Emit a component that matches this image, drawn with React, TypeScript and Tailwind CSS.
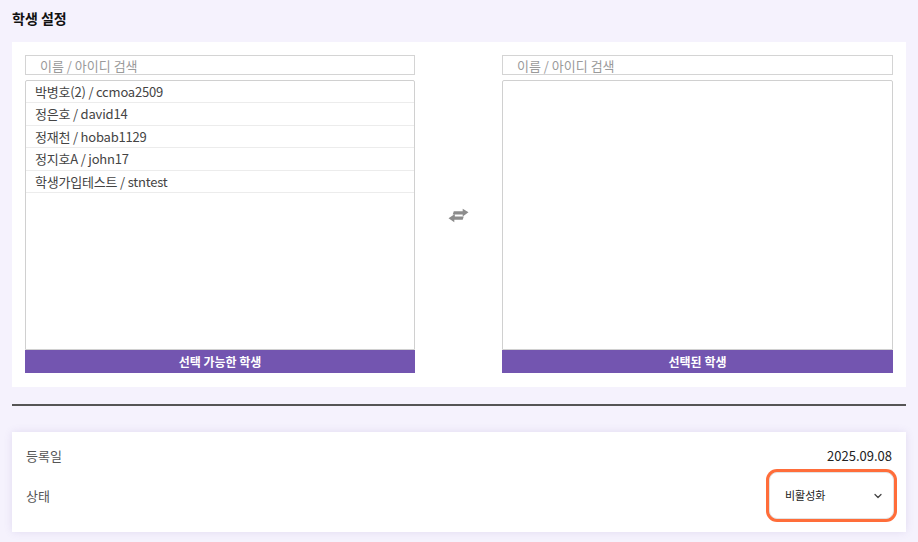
import React, { useState } from 'react';

const students = [
  '박병호(2) / ccmoa2509',
  '정은호 / david14',
  '정재천 / hobab1129',
  '정지호A / john17',
  '학생가입테스트 / stntest',
];

const FONT = { fontFamily: '"Noto Sans CJK KR", "Noto Sans", sans-serif' };

const StudentBox: React.FC<{ label: string; items: string[] }> = ({ label, items }) => {
  const [query, setQuery] = useState('');
  const shown = items.filter((s) => s.includes(query));

  return (
    <div className="flex flex-col">
      <input
        value={query}
        onChange={(e) => setQuery(e.target.value)}
        placeholder="이름 / 아이디 검색"
        className="h-[20px] border border-[#d4d4d4] bg-white px-[14px] text-[13px] text-[#444] outline-none placeholder:text-[#9a9a9a]"
      />
      <div className="mt-[5px] h-[270px] overflow-y-auto rounded-t-[2px] border border-[#d0d0d0] bg-white">
        {shown.map((s) => (
          <div
            key={s}
            className="flex h-[22.4px] items-center border-b border-[#ececec] px-[9px] text-[13px] tracking-[-0.2px] text-[#444]"
          >
            {s}
          </div>
        ))}
      </div>
      <div className="flex h-[23px] items-center justify-center bg-[#7355b0] text-[12px] font-bold text-white">
        {label}
      </div>
    </div>
  );
};

// two offset arrows, slightly slanted
const SwapIcon = () => (
  <svg width="21" height="15" viewBox="0 0 20 14" fill="#8c8c8c">
    <path d="M5.5 3h8.5V0.5L19.5 4 14 8V6H4.5z" />
    <path d="M15 8H6.5V5.5L0.5 9.5 6 13.5V11h8z" />
  </svg>
);

export default function App() {
  return (
    <div className="min-h-[542px] bg-[#f5f2fd] px-3" style={FONT}>
      <div className="flex h-[42px] items-start pt-[8px]">
        <h1 className="text-[14px] leading-[20px] font-bold text-[#111]">학생 설정</h1>
      </div>

      <div className="grid grid-cols-[390px_87px_1fr] bg-white px-[13px] pt-[13px] pb-[14px]">
        <StudentBox label="선택 가능한 학생" items={students} />
        <div className="flex items-center justify-center pt-[2px]">
          <SwapIcon />
        </div>
        <StudentBox label="선택된 학생" items={[]} />
      </div>

      <div className="mt-[17px] h-[2px] bg-[#555]" />

      <div className="mt-[26px] bg-white px-[14px] pt-[14px] pb-[13px] shadow-[0_0_8px_rgba(110,90,170,0.14)]">
        <div className="flex h-[20px] items-center justify-between text-[13px]">
          <span className="text-[#555]">등록일</span>
          <span className="text-[#222]">2025.09.08</span>
        </div>
        <div className="mt-[6px] flex items-center justify-between text-[13px]">
          <span className="text-[#555]">상태</span>
          <div className="-mr-[2px] flex h-[47px] w-[125px] items-center justify-between rounded-[8px] border border-[#e2e2e2] bg-white pr-[9px] pl-[15px] ring-[3px] ring-[#ff6d3a]">
            <span className="text-[11px] text-[#222]">비활성화</span>
            <svg width="12" height="12" viewBox="0 0 24 24" fill="none" stroke="#444" strokeWidth="2.5" strokeLinecap="round" strokeLinejoin="round">
              <path d="m6 9 6 6 6-6" />
            </svg>
          </div>
        </div>
      </div>
    </div>
  );
}
